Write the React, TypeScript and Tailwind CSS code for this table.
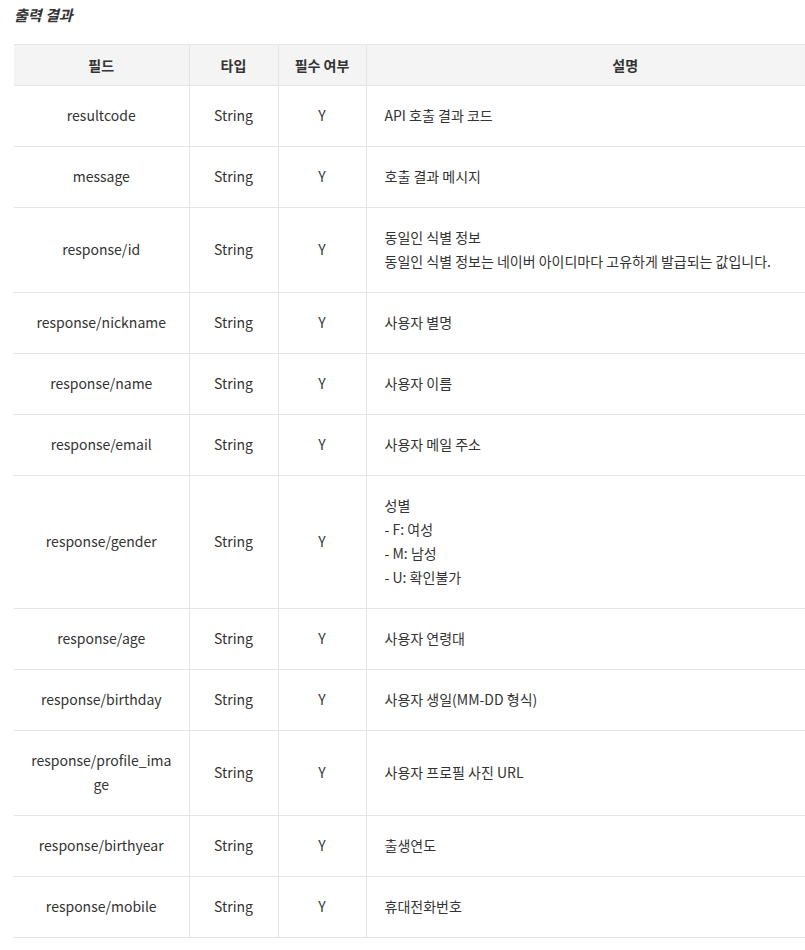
const rows: { field: string; desc: string[] }[] = [
  { field: "resultcode", desc: ["API 호출 결과 코드"] },
  { field: "message", desc: ["호출 결과 메시지"] },
  {
    field: "response/id",
    desc: ["동일인 식별 정보", "동일인 식별 정보는 네이버 아이디마다 고유하게 발급되는 값입니다."],
  },
  { field: "response/nickname", desc: ["사용자 별명"] },
  { field: "response/name", desc: ["사용자 이름"] },
  { field: "response/email", desc: ["사용자 메일 주소"] },
  { field: "response/gender", desc: ["성별", "- F: 여성", "- M: 남성", "- U: 확인불가"] },
  { field: "response/age", desc: ["사용자 연령대"] },
  { field: "response/birthday", desc: ["사용자 생일(MM-DD 형식)"] },
  { field: "response/profile_image", desc: ["사용자 프로필 사진 URL"] },
  { field: "response/birthyear", desc: ["출생연도"] },
  { field: "response/mobile", desc: ["휴대전화번호"] },
];

export default function App() {
  return (
    <div className="min-h-[950px] w-[805px] overflow-hidden bg-white font-['Noto_Sans_CJK_KR','Noto_Sans',sans-serif] text-[#333333]">
      <div className="px-[14px] pt-[3px]">
        <h4 className="text-[15px] font-bold italic leading-[24px]">출력 결과</h4>
        <table className="mt-[17px] w-[870px] table-fixed border-collapse text-[14px] leading-[24px]">
          <colgroup>
            <col className="w-[175px]" />
            <col className="w-[89px]" />
            <col className="w-[88px]" />
            <col />
          </colgroup>
          <thead>
            <tr className="bg-[#f4f4f4]">
              {["필드", "타입", "필수 여부", "설명"].map((h, i) => (
                <th
                  key={h}
                  className={
                    "border-y border-[#e5e5e5] py-[8px] text-center font-bold " +
                    (i > 0 ? "border-l" : "")
                  }
                >
                  {h}
                </th>
              ))}
            </tr>
          </thead>
          <tbody>
            {rows.map((r) => (
              <tr key={r.field}>
                <td className="break-all border-b border-[#e5e5e5] px-[15px] pt-[17px] pb-[19px] text-center">
                  {r.field}
                </td>
                <td className="border-b border-l border-[#e5e5e5] pt-[17px] pb-[19px] text-center">String</td>
                <td className="border-b border-l border-[#e5e5e5] pt-[17px] pb-[19px] text-center">Y</td>
                <td className="border-b border-l border-[#e5e5e5] px-[18px] pt-[17px] pb-[19px] text-left">
                  {r.desc.map((d) => (
                    <div key={d}>{d}</div>
                  ))}
                </td>
              </tr>
            ))}
          </tbody>
        </table>
      </div>
    </div>
  );
}
